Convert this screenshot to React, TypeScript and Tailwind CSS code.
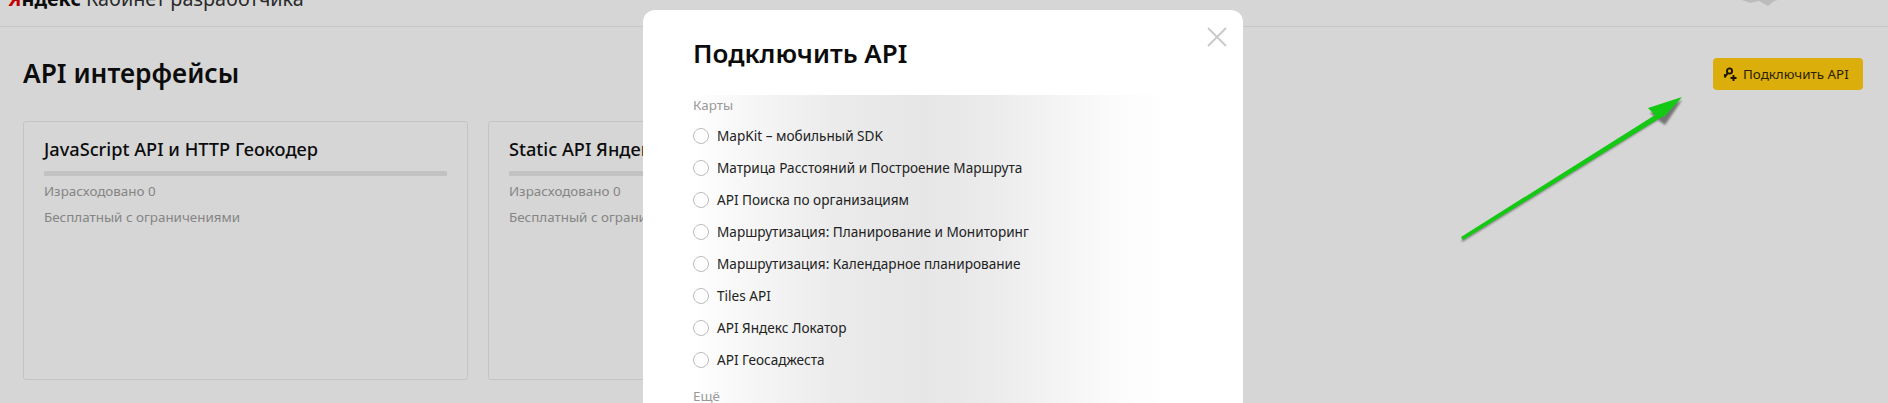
const items = [
  "MapKit – мобильный SDK",
  "Матрица Расстояний и Построение Маршрута",
  "API Поиска по организациям",
  "Маршрутизация: Планирование и Мониторинг",
  "Маршрутизация: Календарное планирование",
  "Tiles API",
  "API Яндекс Локатор",
  "API Геосаджеста",
];

function Card({ title }: { title: string }) {
  return (
    <div className="h-[259px] w-[445px] shrink-0 rounded-[3px] border border-[#c4c4c4] pt-[15px] px-[20px]">
      <div className="h-[24px] text-[18.2px] leading-[24px] font-medium text-[#0c0c0c] whitespace-nowrap">{title}</div>
      <div className="mt-[10px] h-[5px] rounded-[1px] bg-[#c2c2c2]" />
      <div className="mt-[4px] h-[22px] text-[13.4px] leading-[22px] text-[#858585] whitespace-nowrap">Израсходовано 0</div>
      <div className="mt-[4px] h-[22px] text-[13.4px] leading-[22px] text-[#858585] whitespace-nowrap">Бесплатный с ограничениями</div>
    </div>
  );
}

export default function App() {
  return (
    <div className="relative h-[403px] w-[1888px] overflow-hidden bg-[#d6d6d6] font-['Noto_Sans',sans-serif]">
      <header className="flex h-[27px] items-end overflow-hidden border-b border-[#c6c6c6] pl-[8px] pb-[15px]">
        <div className="text-[19.8px] leading-[24px] whitespace-nowrap text-[#2a2a2a]">
          <span className="font-bold text-[#0c0c0c]"><span className="text-[#c40000]">Я</span>ндекс</span> Кабинет разработчика
        </div>
      </header>
      <svg className="pointer-events-none absolute left-[1740px] top-0" width="40" height="8" viewBox="0 0 40 8">
        <path d="M2 0 L10 3 L19 1 L28 6 L34 1 L38 0 Z" fill="#bcbcbc" />
      </svg>
      <main className="px-[23px]">
        <div className="mt-[31px] flex h-[32px] items-start justify-between pr-[2px]">
          <h1 className="text-[26.3px] leading-[30px] font-semibold text-[#0c0c0c]">API интерфейсы</h1>
          <button className="flex h-[32px] w-[150px] items-center gap-[6px] rounded-[4px] bg-[#dcae0b] pl-[10px] text-[13.4px] text-[#2a2205]">
            <svg width="14" height="15" viewBox="0 0 14 15" fill="none">
              <circle cx="6.5" cy="4" r="2.6" stroke="#1a1500" strokeWidth="1.9" />
              <path d="M4.8 6 L1.5 10.5 M3 8.5 L1 8" stroke="#1a1500" strokeWidth="1.9" />
              <path d="M10.5 8v6M7.5 11h6" stroke="#1a1500" strokeWidth="1.9" />
            </svg>
            Подключить API
          </button>
        </div>
        <div className="mt-[31px] flex gap-[20px]">
          <Card title="JavaScript API и HTTP Геокодер" />
          <Card title="Static API Яндекс Карт" />
        </div>
      </main>

      <section className="absolute left-[643px] top-[10px] h-[420px] w-[600px] overflow-hidden rounded-[12px] bg-white pl-[50px]">
        <div className="pointer-events-none absolute left-[50px] top-[85px] h-[340px] w-[480px] bg-[linear-gradient(90deg,#ffffff_0%,#f6f6f6_12%,#ebebeb_30%,#e6e6e6_48%,#ebebeb_62%,#f4f4f4_76%,#fbfbfb_88%,#ffffff_100%)]" />
        <svg className="absolute left-[564px] top-[17px]" width="20" height="20" viewBox="0 0 20 20">
          <path d="M1 1 L19 19 M19 1 L1 19" stroke="#c9c9c9" strokeWidth="1.8" />
        </svg>
        <div className="relative">
          <h2 className="mt-[27px] h-[32px] text-[26px] leading-[32px] font-semibold text-[#0c0c0c]">Подключить API</h2>
          <div className="mt-[25px] h-[22px] text-[13.4px] leading-[22px] text-[#999999]">Карты</div>
          <ul className="mt-[4px]">
            {items.map((t) => (
              <li key={t} className="flex h-[32px] items-center gap-[8px] text-[13.6px] text-[#222222] whitespace-nowrap">
                <span className="h-[16px] w-[16px] shrink-0 rounded-full border border-[#bdbdbd] bg-white" />
                {t}
              </li>
            ))}
          </ul>
          <div className="mt-[9px] h-[22px] text-[13.4px] leading-[22px] text-[#999999]">Ещё</div>
        </div>
      </section>

      <svg className="pointer-events-none absolute left-[1450px] top-[90px]" width="240" height="160" viewBox="0 0 240 160">
        <path className="blur-[1px]" d="M12 152 L208 30 L215 35 L232 10 L200 23 L206 28 L12 149 Z" fill="#555555" opacity="0.75" />
        <path d="M11 147 L205 25 L198 18 L232 7 L215 26 L210 28 L13 150 Z" fill="#14c814" />
      </svg>
    </div>
  );
}
